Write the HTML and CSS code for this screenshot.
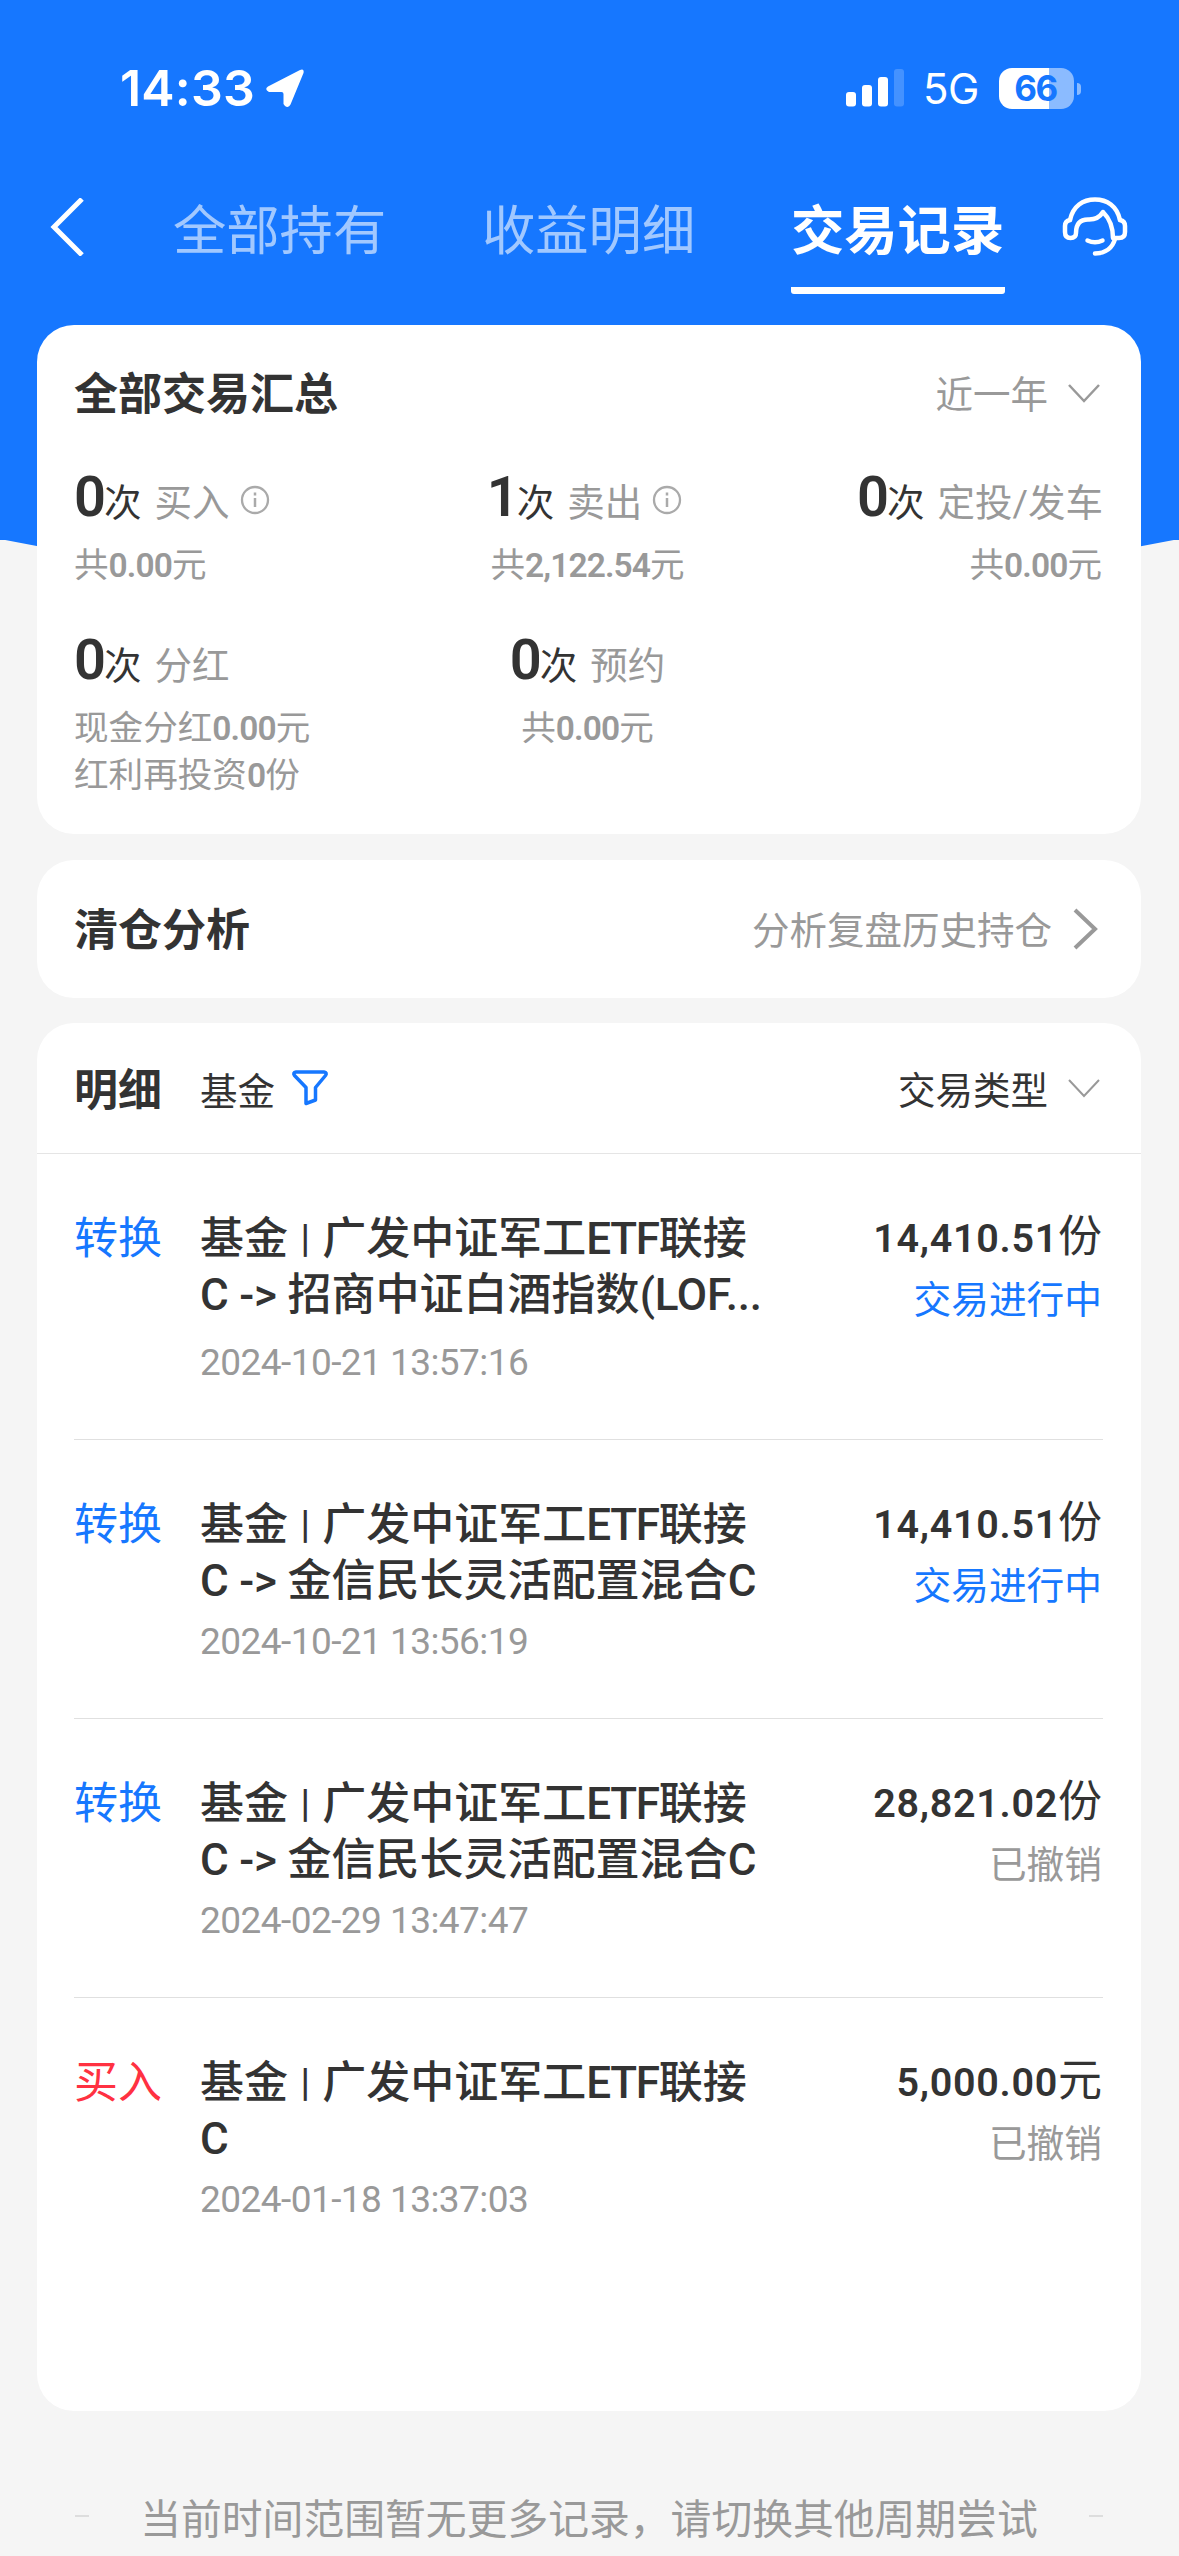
FILE: index.html
```html
<!DOCTYPE html>
<html lang="zh-CN">
<head>
<meta charset="utf-8">
<title>交易记录</title>
<link rel="stylesheet" href="styles.css">
</head>
<body>
<div class="page">
  <header class="top">
    <div class="status">
      <span class="clock">14:33</span>
      <svg class="locate" width="40" height="40" viewBox="0 0 40 40"><path d="M3 18.500 34.500 2.300Q39.500 0 38.500 5L25.500 36.500Q23.500 40.500 20 38L18.500 36V26Q18.500 24 16.500 24H4Q-1 21.500 3 18.500Z" fill="#fff"/></svg>
      <svg class="signal" width="59" height="38" viewBox="0 0 59 38" fill="#fff"><rect x="0" y="23" width="10" height="14.500" rx="3"/><rect x="16" y="16" width="10" height="21.500" rx="3"/><rect x="32" y="8" width="10" height="29.500" rx="3"/><rect x="48" y="0" width="10" height="37.500" rx="3" opacity=".2"/></svg>
      <span class="network">5G</span>
      <span class="battery"><span class="battery-level">66</span><i class="battery-tip"></i></span>
    </div>
    <nav class="nav">
      <svg class="back" width="36" height="58" viewBox="0 0 36 58"><path d="M32 1 4 29 32 57" fill="none" stroke="#fff" stroke-width="5"/></svg>
      <span class="tab">全部持有</span>
      <span class="tab">收益明细</span>
      <span class="tab active">交易记录</span>
      <svg class="service" width="66" height="62" viewBox="0 0 66 62" fill="none" stroke="#fff" stroke-width="4.500" stroke-linecap="round" stroke-linejoin="round"><path d="M8 24C11 10 21 3.500 33 3.500S55 10 58 24"/><path d="M8 24Q3 25 3 30V36Q3 42 8.500 42T14 37C14 27 19 23.500 26 23.500Q36 24 41 16Q51 26 51 42H57Q63 42 63 36V30Q63 25 58 24"/><path d="M53 43Q49 57 33 57.500"/><path d="M25.500 44.500Q33 48 40.500 44.500"/></svg>
    </nav>
  </header>

  <main class="content">
    <section class="card summary">
      <div class="row">
        <h2 class="heading">全部交易汇总</h2>
        <div class="picker">近一年<svg class="down" width="32" height="20" viewBox="0 0 32 20"><path d="M1 1 16 17 31 1" fill="none" stroke="#999" stroke-width="2.500"/></svg></div>
      </div>
      <div class="stats">
        <div class="stat">
          <div class="stat-main"><b>0</b><span class="unit">次</span>买入<svg class="info" width="30" height="30" viewBox="0 0 30 30"><circle cx="15" cy="15" r="13" fill="none" stroke="#aaa" stroke-width="2.300"/><path d="M15 13V22M15 7.500V10.500" stroke="#aaa" stroke-width="2.500"/></svg></div>
          <div class="stat-sub">共<i>0.00</i>元</div>
        </div>
        <div class="stat middle">
          <div class="stat-main"><b>1</b><span class="unit">次</span>卖出<svg class="info" width="30" height="30" viewBox="0 0 30 30"><circle cx="15" cy="15" r="13" fill="none" stroke="#aaa" stroke-width="2.300"/><path d="M15 13V22M15 7.500V10.500" stroke="#aaa" stroke-width="2.500"/></svg></div>
          <div class="stat-sub">共<i>2,122.54</i>元</div>
        </div>
        <div class="stat last">
          <div class="stat-main"><b>0</b><span class="unit">次</span>定投/发车</div>
          <div class="stat-sub">共<i>0.00</i>元</div>
        </div>
        <div class="stat">
          <div class="stat-main"><b>0</b><span class="unit">次</span>分红</div>
          <div class="stat-sub">现金分红<i>0.00</i>元</div>
          <div class="stat-sub">红利再投资<i>0</i>份</div>
        </div>
        <div class="stat middle">
          <div class="stat-main"><b>0</b><span class="unit">次</span>预约</div>
          <div class="stat-sub">共<i>0.00</i>元</div>
        </div>
      </div>
    </section>

    <section class="card analysis row">
      <h2 class="heading">清仓分析</h2>
      <div class="picker">分析复盘历史持仓<svg class="right" width="28" height="42" viewBox="0 0 28 42"><path d="M3 2 23 21 3 40" fill="none" stroke="#999" stroke-width="4"/></svg></div>
    </section>

    <section class="card details">
      <div class="details-head row">
        <div class="details-left">
          <h2 class="heading">明细</h2>
          <span class="fund">基金</span>
          <svg class="filter" width="38" height="40" viewBox="0 0 38 40"><path d="M5 4H33Q36.500 4.500 34.500 7.500L24.500 19.500V32L15 35.500V19.500L3.500 7.500Q1.500 4.500 5 4Z" fill="none" stroke="#1677ff" stroke-width="3.500" stroke-linejoin="round"/></svg>
        </div>
        <div class="picker dark">交易类型<svg class="down" width="32" height="20" viewBox="0 0 32 20"><path d="M1 1 16 17 31 1" fill="none" stroke="#999" stroke-width="2"/></svg></div>
      </div>
      <ul class="list">
        <li class="item tall">
          <span class="kind">转换</span>
          <div class="info-col"><div class="name">基金 <s>|</s> 广发中证军工<i>ETF</i>联接<br><i class="wide">C -&gt;</i> 招商中证白酒指数<i class="wide">(LOF...</i></div><time class="time">2024-10-21 13:57:16</time></div>
          <div class="amount-col"><div class="amount"><b>14,410.51</b>份</div><div class="state pending">交易进行中</div></div>
        </li>
        <li class="item">
          <span class="kind">转换</span>
          <div class="info-col"><div class="name">基金 <s>|</s> 广发中证军工<i>ETF</i>联接<br><i class="wide">C -&gt;</i> 金信民长灵活配置混合<i>C</i></div><time class="time">2024-10-21 13:56:19</time></div>
          <div class="amount-col"><div class="amount"><b>14,410.51</b>份</div><div class="state pending">交易进行中</div></div>
        </li>
        <li class="item">
          <span class="kind">转换</span>
          <div class="info-col"><div class="name">基金 <s>|</s> 广发中证军工<i>ETF</i>联接<br><i class="wide">C -&gt;</i> 金信民长灵活配置混合<i>C</i></div><time class="time">2024-02-29 13:47:47</time></div>
          <div class="amount-col"><div class="amount"><b>28,821.02</b>份</div><div class="state">已撤销</div></div>
        </li>
        <li class="item">
          <span class="kind buy">买入</span>
          <div class="info-col"><div class="name">基金 <s>|</s> 广发中证军工<i>ETF</i>联接<br><i>C</i></div><time class="time">2024-01-18 13:37:03</time></div>
          <div class="amount-col"><div class="amount"><b>5,000.00</b>元</div><div class="state">已撤销</div></div>
        </li>
      </ul>
    </section>
  </main>

  <footer class="end"><span class="dash"></span><span>当前时间范围暂无更多记录，请切换其他周期尝试</span><span class="dash"></span></footer>
</div>
</body>
</html>
```

FILE: styles.css
```css
* { box-sizing: border-box; margin: 0; padding: 0; }
body { background: #f5f5f5; }
i, s { font-style: normal; text-decoration: none; }
svg { display: block; flex: none; }
.page {
  width: 1179px; height: 2556px; overflow: hidden;
  display: flex; flex-direction: column;
  background: #f5f5f5;
  background-image: linear-gradient(#1677ff, #1677ff);
  background-repeat: no-repeat; background-size: 100% 540px;
  font-family: Roboto, "Noto Sans CJK SC", sans-serif;
  color: #333; white-space: nowrap; position: relative; z-index: 0;
}
.page::before {
  content: ""; position: absolute; z-index: -1; left: 0; top: 539px; width: 1179px; height: 112px;
  background: #1677ff; clip-path: polygon(0 0, 100% 0, 50% 100%);
}
.top { height: 325px; color: #fff; }

.status { display: flex; align-items: center; height: 176px; padding-right: 98px; }
.clock { font: 600 50px/60px Inter, sans-serif; width: 145px; margin-left: 120px; letter-spacing: 0.2px; }
.locate { margin-right: auto; }
.signal { margin-right: 18px; }
.network { font: 400 42px/60px Inter, sans-serif; width: 78px; letter-spacing: -0.500px; padding-top: 2px; }
.battery {
  position: relative; width: 75px; height: 41px; border-radius: 13px; margin-right: 7px;
  background: linear-gradient(90deg, #fff 50px, rgba(255,255,255,.5) 50px);
  color: #1677ff; text-align: center; margin-left: -2px;
}
.battery-level { display: block; font: 700 35px/41px Inter, sans-serif; letter-spacing: -1.500px; margin-left: -2px; }
.battery-tip { position: absolute; right: -7px; top: 15px; width: 4px; height: 12px; border-radius: 0 4px 4px 0; background: rgba(255,255,255,.5); }

.nav { display: flex; height: 118px; padding-left: 50px; align-items: flex-start; }
.back { margin: 22px 87px 0 0; }
.tab { font-size: 53.3px; line-height: 80px; height: 118px; width: 214px; padding-top: 16px; margin-right: 95px; color: rgba(255,255,255,.6); }
.tab.active { color: #fff; font-weight: 700; border-bottom: 7px solid #fff; border-radius: 0 0 3px 3px; margin-right: 57px; }
.service { margin-top: 20px; }

.content { padding: 0 38px 0 37px; display: flex; flex-direction: column; gap: 25.500px; }
.card { background: #fff; border-radius: 37px; }
.row { display: flex; align-items: center; justify-content: space-between; padding: 5px 38px 0 37px; }
.heading { font-size: 44px; line-height: 64px; font-weight: 700; }
.picker { display: flex; align-items: center; font-size: 37.500px; line-height: 56px; color: #999; }
.picker.dark { color: #333; }
.down { margin: -3px 3px 0 20px; }
.right { margin: -5px 3px 0 20px; }

.summary { height: 509px; padding-top: 33px; }
.stats { display: grid; grid-template-columns: 359px 309px 1fr; padding: 0 38px 0 37px; margin-top: 37px; }
.stat { height: 163px; }
.middle { text-align: center; }
.middle .stat-main { justify-content: center; }
.middle .info { margin-right: 6px; }
.last { text-align: right; }
.last .stat-main { justify-content: flex-end; }
.last .stat-sub { padding-right: 1px; }
.stat-main { display: flex; align-items: baseline; height: 66px; line-height: 66px; font-size: 37.500px; color: #999; }
.stat-main b { font-size: 56px; font-weight: 600; color: #333; letter-spacing: -2px; }
.unit { color: #333; margin-right: 13px; }
.info { align-self: center; margin: 6px 0 0 10px; }
.stat-sub { font-size: 34.600px; line-height: 47px; color: #999; margin-top: 12px; }
.stat-sub + .stat-sub { margin-top: 0; }
.stat-sub i { font-size: 33.500px; font-weight: 600; letter-spacing: -0.900px; }

.analysis { height: 138px; }

.details { height: 1388px; }
.details-head { height: 131px; border-bottom: 1px solid #e5e5e5; }
.details-left { display: flex; align-items: center; }
.fund { font-size: 37.500px; margin: -4px 16px 0 38px; }
.filter { margin-top: -6px; }
.list { list-style: none; padding: 0 38px 0 37px; }
.item { display: flex; height: 279px; padding-top: 57px; border-bottom: 1px solid #e0e0e0; }
.item.tall { height: 286px; }
.item:last-child { border: 0; }
.kind { width: 126px; font-size: 44px; line-height: 56px; color: #1677ff; }
.kind.buy { color: #ff3141; }
.name { font-size: 44px; line-height: 56px; font-weight: 500; }
.name i { letter-spacing: -1.300px; }
.name s { font-size: 38px; line-height: 1; margin: 0 1.500px; position: relative; top: -2px; }
.name .wide { letter-spacing: -0.200px; }
.time { display: block; font-size: 37px; line-height: 56px; margin-top: 5px; letter-spacing: -0.550px; color: #999; }
.tall .time { margin-top: 12px; }
.amount-col { margin: -2px 1px 0 auto; text-align: right; }
.amount { font-size: 44px; line-height: 56px; }
.amount b { font-size: 39.500px; font-weight: 600; letter-spacing: 0.700px; }
.state { font-size: 37.700px; line-height: 56px; margin-top: 5px; color: #999; }
.state.pending { color: #1677ff; }

.end { display: flex; align-items: center; justify-content: space-between; padding: 0 76px 0 75px; margin-top: 75px; height: 60px; font-size: 40.800px; color: #999; }
.dash { width: 14px; height: 2px; background: #ddd; }
```
